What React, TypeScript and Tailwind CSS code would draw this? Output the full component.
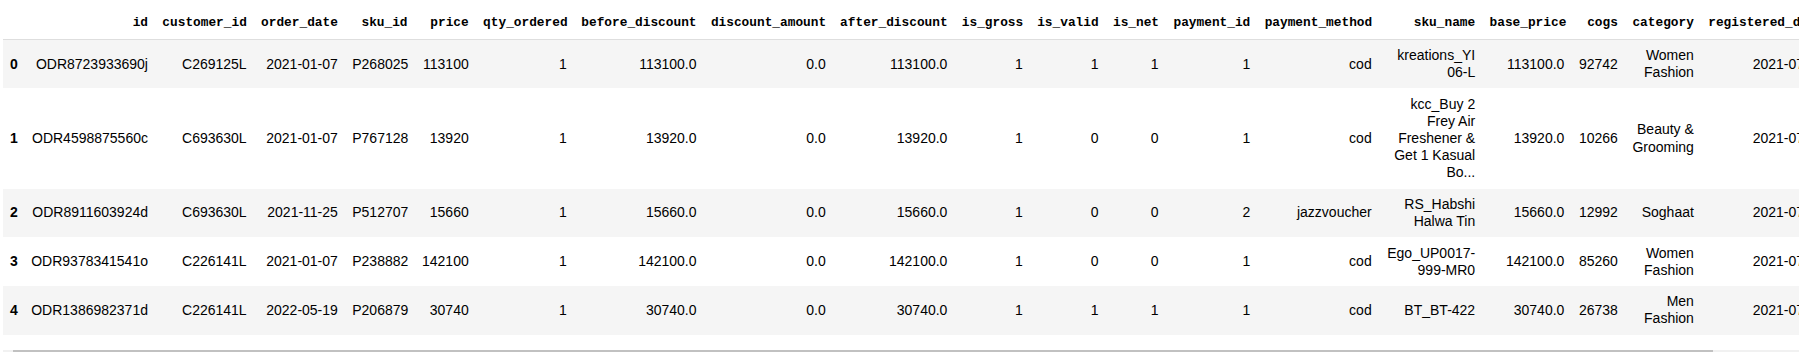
import React from "react";

const COLS =
  "grid grid-cols-[21.2px_131.3px_98.7px_91.2px_69.7px_61.2px_98px_129.8px_129.2px_121.7px_75.4px_75.8px_60px_91.7px_121.4px_103.5px_89.2px_53.5px_76px_129.4px_110px]";

const headers = [
  "",
  "id",
  "customer_id",
  "order_date",
  "sku_id",
  "price",
  "qty_ordered",
  "before_discount",
  "discount_amount",
  "after_discount",
  "is_gross",
  "is_valid",
  "is_net",
  "payment_id",
  "payment_method",
  "sku_name",
  "base_price",
  "cogs",
  "category",
  "registered_date",
  "year",
];

const rows: string[][] = [
  ["0", "ODR8723933690j", "C269125L", "2021-01-07", "P268025", "113100", "1", "113100.0", "0.0", "113100.0", "1", "1", "1", "1", "cod", "kreations_YI 06-L", "113100.0", "92742", "Women Fashion", "2021-07-11", "2021"],
  ["1", "ODR4598875560c", "C693630L", "2021-01-07", "P767128", "13920", "1", "13920.0", "0.0", "13920.0", "1", "0", "0", "1", "cod", "kcc_Buy 2 Frey Air Freshener & Get 1 Kasual Bo...", "13920.0", "10266", "Beauty & Grooming", "2021-07-11", "2021"],
  ["2", "ODR8911603924d", "C693630L", "2021-11-25", "P512707", "15660", "1", "15660.0", "0.0", "15660.0", "1", "0", "0", "2", "jazzvoucher", "RS_Habshi Halwa Tin", "15660.0", "12992", "Soghaat", "2021-07-11", "2021"],
  ["3", "ODR9378341541o", "C226141L", "2021-01-07", "P238882", "142100", "1", "142100.0", "0.0", "142100.0", "1", "0", "0", "1", "cod", "Ego_UP0017-999-MR0", "142100.0", "85260", "Women Fashion", "2021-07-11", "2021"],
  ["4", "ODR1386982371d", "C226141L", "2022-05-19", "P206879", "30740", "1", "30740.0", "0.0", "30740.0", "1", "1", "1", "1", "cod", "BT_BT-422", "30740.0", "26738", "Men Fashion", "2021-07-11", "2021"],
];

export default function App() {
  return (
    <div className="w-[1808px] h-[352px] bg-white overflow-hidden relative">
      <div className="ml-[2.7px] w-[1796.3px] overflow-hidden pt-[7px] text-black">
        <div className={`${COLS} w-max border-b border-[#dedede] items-center font-['Liberation_Mono',monospace] text-[12.8px] font-bold leading-[17.1px]`}>
          {headers.map((h, i) => (
            <div key={i} className="px-[7.2px] py-[7.3px] text-right whitespace-nowrap">
              {h}
            </div>
          ))}
        </div>
        {rows.map((r, ri) => (
          <div
            key={ri}
            className={`${COLS} w-max items-center font-['Liberation_Sans',Arial,sans-serif] text-[14px] leading-[17.1px] ${ri % 2 === 0 ? "bg-[#f5f5f5]" : "bg-white"}`}
          >
            {r.map((c, ci) => (
              <div
                key={ci}
                className={`px-[7.2px] py-[7.3px] text-right ${ci === 0 ? "font-bold" : ""}`}
              >
                {c}
              </div>
            ))}
          </div>
        ))}
      </div>
      <div className="absolute left-[2.7px] top-[350px] w-[1796.3px] h-[3px] bg-[#f1f1f1]">
        <div className="ml-[10.3px] w-[1700px] h-full bg-[#c1c1c1]" />
      </div>
    </div>
  );
}
